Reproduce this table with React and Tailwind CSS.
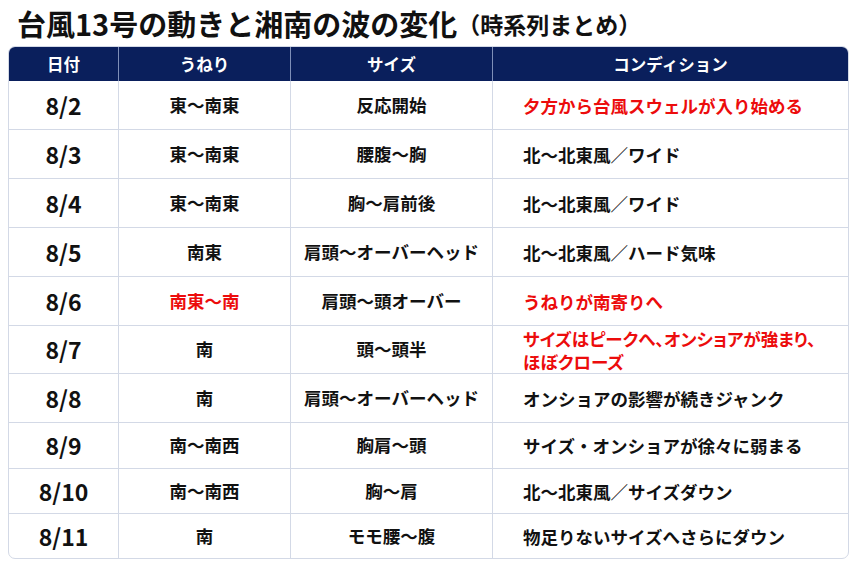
import React from "react";

const RED = "text-[#ec0c0c]";

const ROWS = [
  { date: "8/2", swell: "東〜南東", size: "反応開始", cond: ["夕方から台風スウェルが入り始める"], condRed: true, h: "h-[49px]" },
  { date: "8/3", swell: "東〜南東", size: "腰腹〜胸", cond: ["北〜北東風／ワイド"], h: "h-[49px]" },
  { date: "8/4", swell: "東〜南東", size: "胸〜肩前後", cond: ["北〜北東風／ワイド"], h: "h-[49px]" },
  { date: "8/5", swell: "南東", size: "肩頭〜オーバーヘッド", cond: ["北〜北東風／ハード気味"], h: "h-[49px]" },
  { date: "8/6", swell: "南東〜南", swellRed: true, size: "肩頭〜頭オーバー", cond: ["うねりが南寄りへ"], condRed: true, h: "h-[49px]" },
  { date: "8/7", swell: "南", size: "頭〜頭半", cond: ["サイズはピークへ、オンショアが強まり、", "ほぼクローズ"], condRed: true, tight: true, h: "h-[48px]" },
  { date: "8/8", swell: "南", size: "肩頭〜オーバーヘッド", cond: ["オンショアの影響が続きジャンク"], h: "h-[49px]" },
  { date: "8/9", swell: "南〜南西", size: "胸肩〜頭", cond: ["サイズ・オンショアが徐々に弱まる"], h: "h-[46px]" },
  { date: "8/10", swell: "南〜南西", size: "胸〜肩", cond: ["北〜北東風／サイズダウン"], h: "h-[45px]" },
  { date: "8/11", swell: "南", size: "モモ腰〜腹", cond: ["物足りないサイズへさらにダウン"], h: "h-[44px]", last: true },
];

const COLS = "grid grid-cols-[109px_172px_202px_1fr]";

export default function App() {
  return (
    <div
      className="w-[856px] h-[571px] bg-white overflow-hidden text-[#111]"
      style={{ fontFamily: '"Noto Sans CJK JP", "Noto Sans", sans-serif' }}
    >
      <h1 className="pl-[17px] h-[46px] flex items-center font-bold leading-none">
        <span className="text-[29px]">台風13号の動きと湘南の波の変化</span>
        <span className="text-[23px] mt-[3px]">（時系列まとめ）</span>
      </h1>

      <div className="mx-[8px] w-[841px] border border-[#d3d9e6] rounded-[7px] overflow-hidden">
        <div className={`${COLS} h-[34px] bg-[#0a1f5c] text-white text-[16.5px] font-bold`}>
          <div className="flex items-center justify-center">日付</div>
          <div className="flex items-center justify-center border-l border-[#7f8fb8]">うねり</div>
          <div className="flex items-center justify-center border-l border-[#7f8fb8]">サイズ</div>
          <div className="flex items-center justify-center border-l border-[#7f8fb8]">コンディション</div>
        </div>

        {ROWS.map((r) => (
          <div
            key={r.date}
            className={`${COLS} ${r.h} ${r.last ? "" : "border-b border-[#d3d9e6]"}`}
          >
            <div className="flex items-center justify-center text-[23px] font-bold">{r.date}</div>
            <div
              className={`flex items-center justify-center border-l border-[#d3d9e6] text-[17.5px] font-bold ${
                r.swellRed ? RED : ""
              }`}
            >
              {r.swell}
            </div>
            <div className="flex items-center justify-center border-l border-[#d3d9e6] text-[17.5px] font-bold">
              {r.size}
            </div>
            <div
              className={`flex flex-col justify-center border-l border-[#d3d9e6] pl-[30px] text-[17.5px] font-bold leading-[23px] ${
                r.condRed ? RED : ""
              } ${r.tight ? "[font-feature-settings:'palt']" : ""}`}
            >
              {r.cond.map((line) => (
                <div key={line} className="whitespace-nowrap">{line}</div>
              ))}
            </div>
          </div>
        ))}
      </div>
    </div>
  );
}
